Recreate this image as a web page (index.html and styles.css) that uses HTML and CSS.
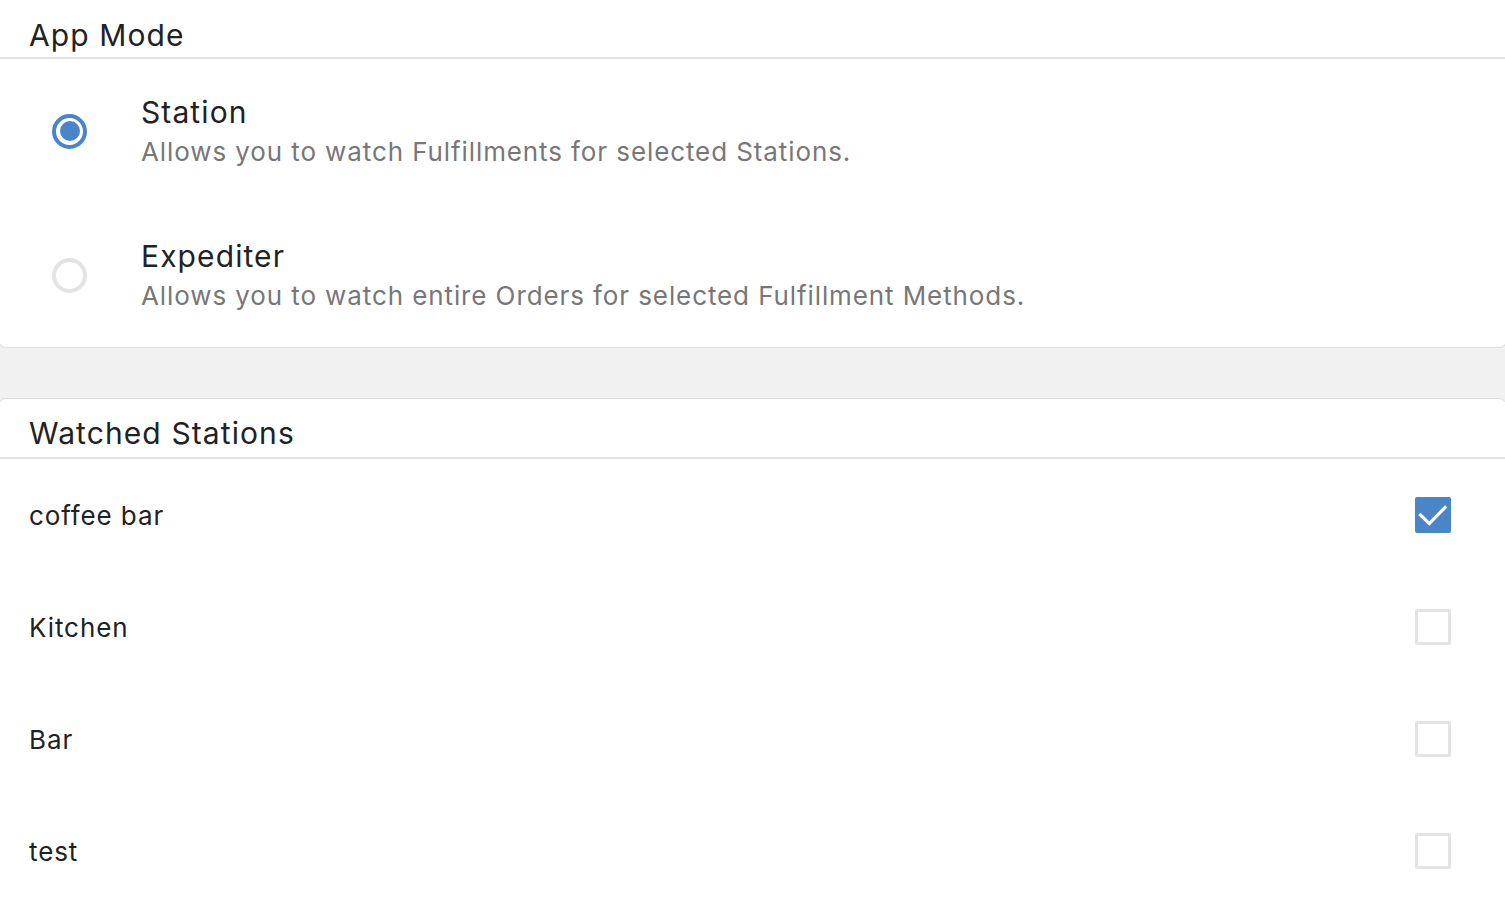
FILE: index.html
```html
<!DOCTYPE html>
<html>
<head>
<meta charset="utf-8">
<link rel="stylesheet" href="styles.css">
</head>
<body>
<section class="card card-top">
  <div class="card-header">App Mode</div>
  <div class="radio-row">
    <span class="radio checked"><span class="dot"></span></span>
    <div class="radio-text">
      <div class="radio-title">Station</div>
      <div class="radio-desc">Allows you to watch Fulfillments for selected Stations.</div>
    </div>
  </div>
  <div class="radio-row">
    <span class="radio"></span>
    <div class="radio-text">
      <div class="radio-title">Expediter</div>
      <div class="radio-desc">Allows you to watch entire Orders for selected Fulfillment Methods.</div>
    </div>
  </div>
</section>
<div class="spacer"></div>
<section class="card card-bottom">
  <div class="card-header">Watched Stations</div>
  <div class="check-row">
    <span class="label">coffee bar</span>
    <span class="checkbox checked">
      <svg viewBox="0 0 36 36" width="36" height="36"><path d="M5.5 18 L14.3 26.6 L30 10.5" fill="none" stroke="#fff" stroke-width="3.2" stroke-linecap="square"/></svg>
    </span>
  </div>
  <div class="check-row">
    <span class="label">Kitchen</span>
    <span class="checkbox"></span>
  </div>
  <div class="check-row">
    <span class="label">Bar</span>
    <span class="checkbox"></span>
  </div>
  <div class="check-row">
    <span class="label">test</span>
    <span class="checkbox"></span>
  </div>
</section>
</body>
</html>
```
FILE: styles.css
```css
html, body {
  margin: 0;
  padding: 0;
  background: #f1f1f1;
}
body {
  font-family: Inter, "Open Sans", "Liberation Sans", sans-serif;
  color: #222;
  overflow: hidden;
}
.card {
  background: #fff;
  border: 1px solid #dedede;
  border-radius: 8px;
  margin: 0 -2px;
}
.card-top {
  border-top: none;
  border-radius: 0 0 8px 8px;
}
.card-bottom {
  padding-bottom: 40px;
}
.card-header {
  height: 59px;
  box-sizing: border-box;
  border-bottom: 2px solid #e2e2e2;
  padding: 12px 0 0 30px;
  display: flex;
  align-items: center;
  font-size: 30px;
  letter-spacing: 1.1px;
}
.card-bottom .card-header {
  height: 60px;
  padding-top: 10px;
}
.radio-row {
  height: 144px;
  display: flex;
  align-items: center;
  padding-left: 53px;
}
.radio {
  width: 35px;
  height: 35px;
  box-sizing: border-box;
  border-radius: 50%;
  border: 4px solid #e3e3e3;
  display: flex;
  align-items: center;
  justify-content: center;
  flex: none;
}
.radio.checked {
  border-color: #4a85c9;
}
.radio .dot {
  width: 20px;
  height: 20px;
  border-radius: 50%;
  background: #4a85c9;
}
.radio-text {
  margin-left: 54px;
  padding-top: 4px;
  display: flex;
  flex-direction: column;
}
.radio-title {
  font-size: 30px;
  line-height: 38px;
  letter-spacing: 1.1px;
}
.radio-desc {
  font-size: 26px;
  line-height: 42px;
  color: #777;
  letter-spacing: 0.9px;
}
.spacer {
  height: 50px;
}
.check-row {
  height: 112px;
  display: flex;
  align-items: center;
  justify-content: space-between;
  padding: 0 55px 0 30px;
}
.label {
  font-size: 26px;
  letter-spacing: 0.9px;
}
.checkbox {
  width: 36px;
  height: 36px;
  box-sizing: border-box;
  border: 3px solid #e3e3e3;
  border-radius: 2px;
  display: block;
}
.checkbox.checked {
  border: none;
  background: #4a85c9;
}
.checkbox svg {
  display: block;
}
```
